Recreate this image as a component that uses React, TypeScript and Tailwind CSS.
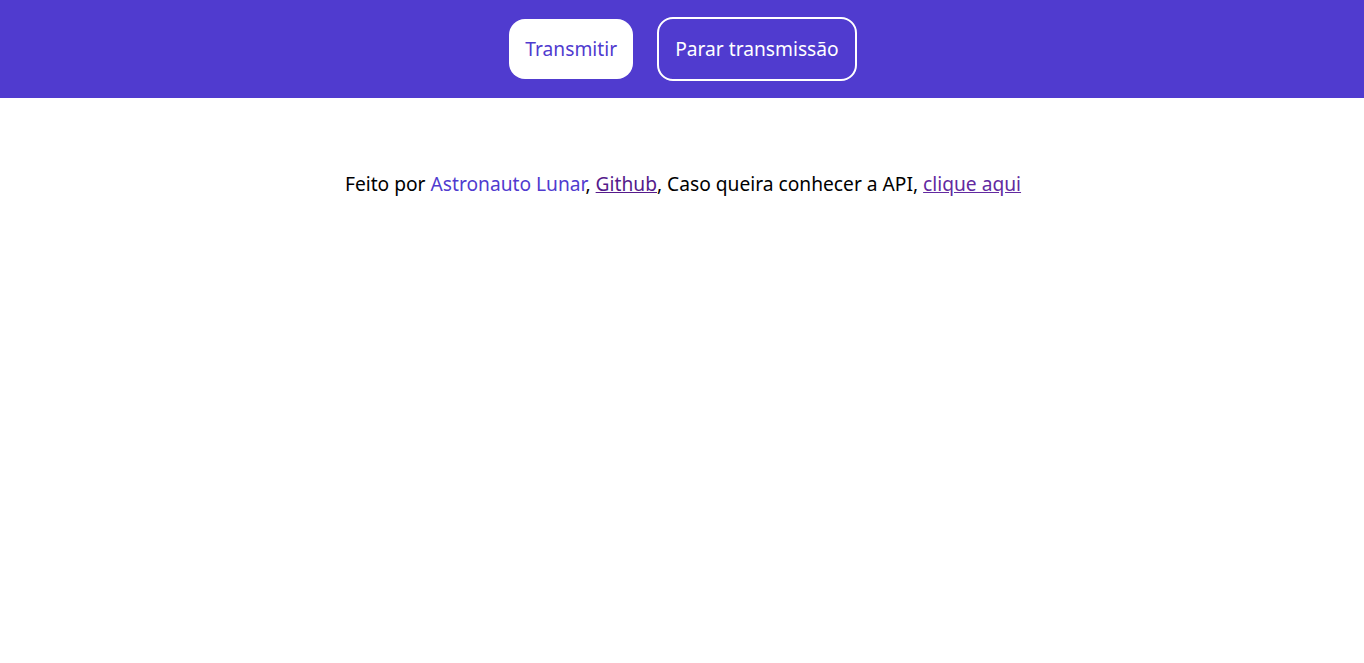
import React from "react";

export default function App() {
  return (
    <div className="min-h-[663px] bg-white" style={{ fontFamily: '"Noto Sans", "Open Sans", sans-serif' }}>
      <header className="flex h-[98px] items-center justify-center gap-6 bg-[#503bcf] pl-[2px]">
        <button className="rounded-2xl bg-white px-4 py-4 text-[19.2px] leading-[28px] text-[#503bcf]">
          Transmitir
        </button>
        <button className="rounded-2xl border-2 border-white px-4 py-4 text-[19.2px] leading-[28px] text-white">
          Parar transmissão
        </button>
      </header>
      <main className="pl-[2px] pt-[72px] text-center text-[19.2px] leading-[27px] text-black">
        <p>
          Feito por <a className="text-[#503bcf]">Astronauto Lunar</a>,{" "}
          <a className="text-[#551a8b] underline">Github</a>, Caso queira conhecer a API,{" "}
          <a className="text-[#6229a0] underline">clique aqui</a>
        </p>
      </main>
    </div>
  );
}
